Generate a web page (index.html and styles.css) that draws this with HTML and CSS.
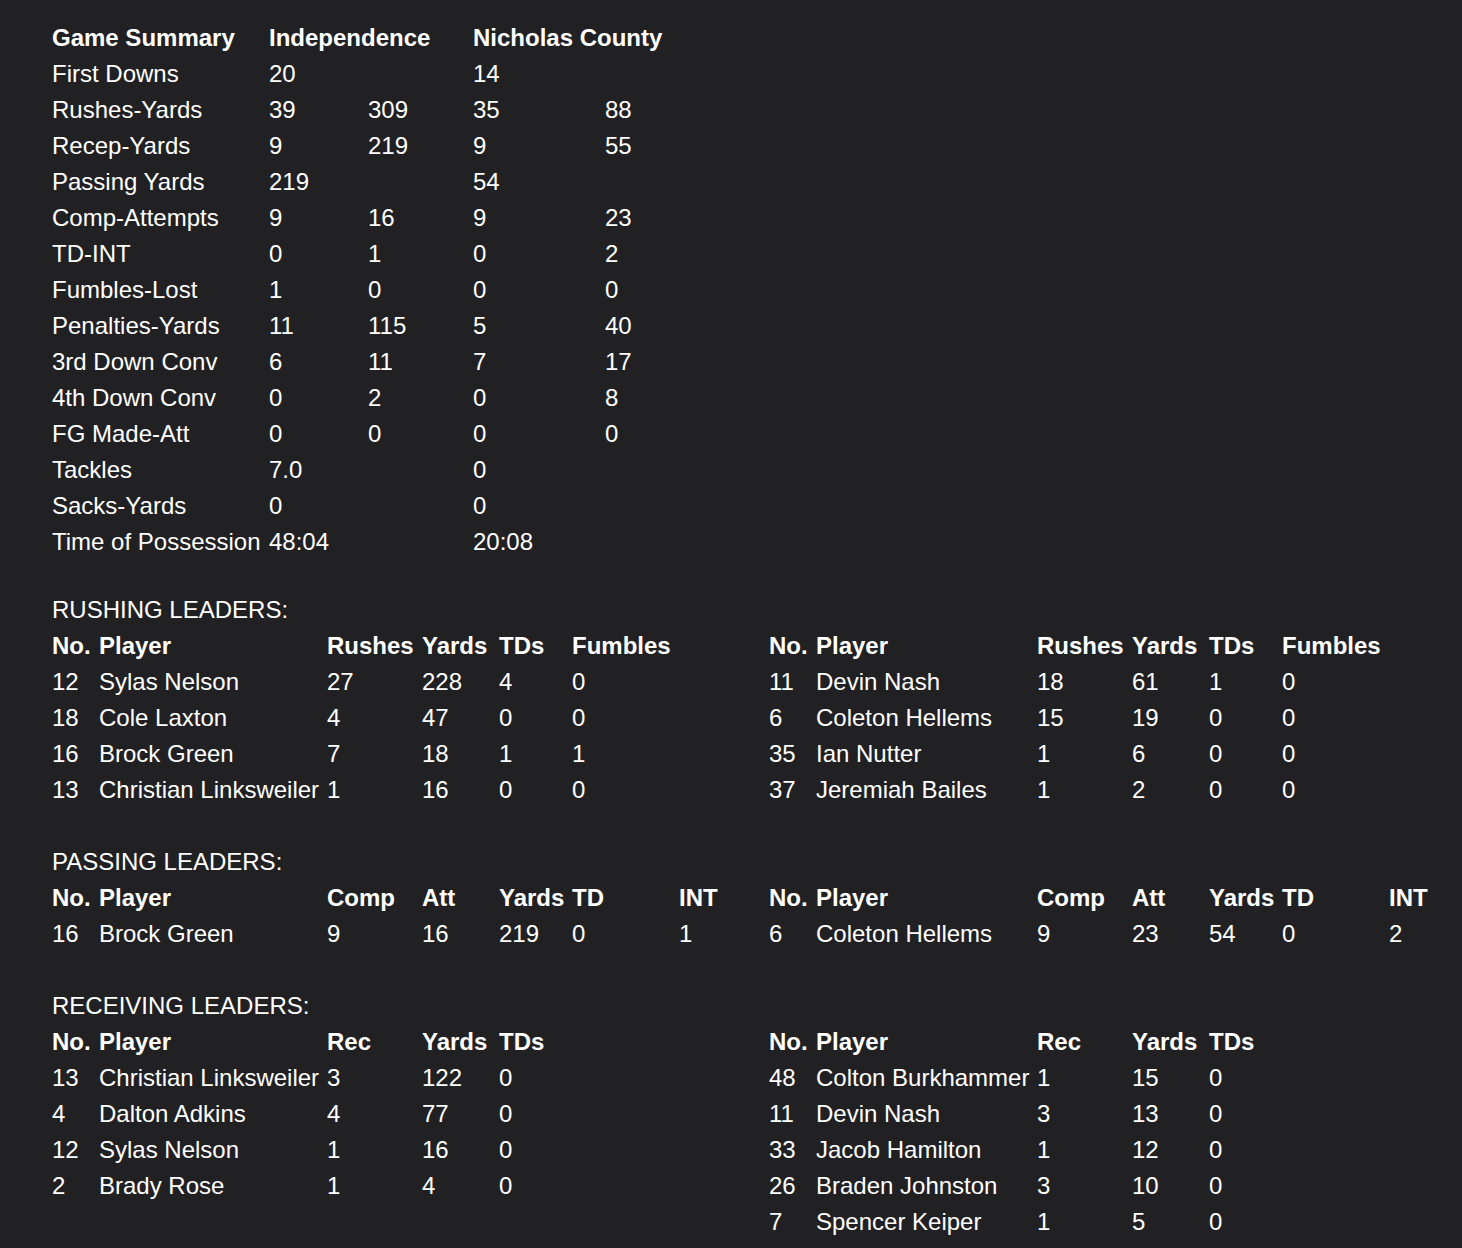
FILE: index.html
```html
<!DOCTYPE html>
<html lang="en">
<head>
<meta charset="utf-8">
<title>Game Summary</title>
<link rel="stylesheet" href="styles.css">
</head>
<body>
<main class="page">
  <table class="summary">
    <colgroup>
      <col class="s-label"><col class="s-a"><col class="s-b"><col class="s-c"><col class="s-d">
    </colgroup>
    <thead>
      <tr><th>Game Summary</th><th colspan="2">Independence</th><th colspan="2">Nicholas County</th></tr>
    </thead>
    <tbody>
      <tr><td>First Downs</td><td>20</td><td></td><td>14</td><td></td></tr>
      <tr><td>Rushes-Yards</td><td>39</td><td>309</td><td>35</td><td>88</td></tr>
      <tr><td>Recep-Yards</td><td>9</td><td>219</td><td>9</td><td>55</td></tr>
      <tr><td>Passing Yards</td><td>219</td><td></td><td>54</td><td></td></tr>
      <tr><td>Comp-Attempts</td><td>9</td><td>16</td><td>9</td><td>23</td></tr>
      <tr><td>TD-INT</td><td>0</td><td>1</td><td>0</td><td>2</td></tr>
      <tr><td>Fumbles-Lost</td><td>1</td><td>0</td><td>0</td><td>0</td></tr>
      <tr><td>Penalties-Yards</td><td>11</td><td>115</td><td>5</td><td>40</td></tr>
      <tr><td>3rd Down Conv</td><td>6</td><td>11</td><td>7</td><td>17</td></tr>
      <tr><td>4th Down Conv</td><td>0</td><td>2</td><td>0</td><td>8</td></tr>
      <tr><td>FG Made-Att</td><td>0</td><td>0</td><td>0</td><td>0</td></tr>
      <tr><td>Tackles</td><td>7.0</td><td></td><td>0</td><td></td></tr>
      <tr><td>Sacks-Yards</td><td>0</td><td></td><td>0</td><td></td></tr>
      <tr><td>Time of Possession</td><td>48:04</td><td></td><td>20:08</td><td></td></tr>
    </tbody>
  </table>

  <table class="leaders">
    <colgroup>
      <col class="c-no"><col class="c-player-l"><col class="c-3"><col class="c-4"><col class="c-5"><col class="c-6"><col class="c-7">
      <col class="c-no"><col class="c-player-r"><col class="c-3"><col class="c-4"><col class="c-5"><col class="c-6"><col class="c-7r">
    </colgroup>
    <tbody>
      <tr><td class="title" colspan="14">RUSHING LEADERS:</td></tr>
      <tr class="head">
        <th>No.</th><th>Player</th><th>Rushes</th><th>Yards</th><th>TDs</th><th>Fumbles</th><th></th>
        <th>No.</th><th>Player</th><th>Rushes</th><th>Yards</th><th>TDs</th><th>Fumbles</th><th></th>
      </tr>
      <tr><td>12</td><td>Sylas Nelson</td><td>27</td><td>228</td><td>4</td><td>0</td><td></td>
          <td>11</td><td>Devin Nash</td><td>18</td><td>61</td><td>1</td><td>0</td><td></td></tr>
      <tr><td>18</td><td>Cole Laxton</td><td>4</td><td>47</td><td>0</td><td>0</td><td></td>
          <td>6</td><td>Coleton Hellems</td><td>15</td><td>19</td><td>0</td><td>0</td><td></td></tr>
      <tr><td>16</td><td>Brock Green</td><td>7</td><td>18</td><td>1</td><td>1</td><td></td>
          <td>35</td><td>Ian Nutter</td><td>1</td><td>6</td><td>0</td><td>0</td><td></td></tr>
      <tr><td>13</td><td>Christian Linksweiler</td><td>1</td><td>16</td><td>0</td><td>0</td><td></td>
          <td>37</td><td>Jeremiah Bailes</td><td>1</td><td>2</td><td>0</td><td>0</td><td></td></tr>
      <tr class="spacer"><td colspan="14"></td></tr>

      <tr><td class="title" colspan="14">PASSING LEADERS:</td></tr>
      <tr class="head">
        <th>No.</th><th>Player</th><th>Comp</th><th>Att</th><th>Yards</th><th>TD</th><th>INT</th>
        <th>No.</th><th>Player</th><th>Comp</th><th>Att</th><th>Yards</th><th>TD</th><th>INT</th>
      </tr>
      <tr><td>16</td><td>Brock Green</td><td>9</td><td>16</td><td>219</td><td>0</td><td>1</td>
          <td>6</td><td>Coleton Hellems</td><td>9</td><td>23</td><td>54</td><td>0</td><td>2</td></tr>
      <tr class="spacer"><td colspan="14"></td></tr>

      <tr><td class="title" colspan="14">RECEIVING LEADERS:</td></tr>
      <tr class="head">
        <th>No.</th><th>Player</th><th>Rec</th><th>Yards</th><th>TDs</th><th></th><th></th>
        <th>No.</th><th>Player</th><th>Rec</th><th>Yards</th><th>TDs</th><th></th><th></th>
      </tr>
      <tr><td>13</td><td>Christian Linksweiler</td><td>3</td><td>122</td><td>0</td><td></td><td></td>
          <td>48</td><td>Colton Burkhammer</td><td>1</td><td>15</td><td>0</td><td></td><td></td></tr>
      <tr><td>4</td><td>Dalton Adkins</td><td>4</td><td>77</td><td>0</td><td></td><td></td>
          <td>11</td><td>Devin Nash</td><td>3</td><td>13</td><td>0</td><td></td><td></td></tr>
      <tr><td>12</td><td>Sylas Nelson</td><td>1</td><td>16</td><td>0</td><td></td><td></td>
          <td>33</td><td>Jacob Hamilton</td><td>1</td><td>12</td><td>0</td><td></td><td></td></tr>
      <tr><td>2</td><td>Brady Rose</td><td>1</td><td>4</td><td>0</td><td></td><td></td>
          <td>26</td><td>Braden Johnston</td><td>3</td><td>10</td><td>0</td><td></td><td></td></tr>
      <tr><td></td><td></td><td></td><td></td><td></td><td></td><td></td>
          <td>7</td><td>Spencer Keiper</td><td>1</td><td>5</td><td>0</td><td></td><td></td></tr>
    </tbody>
  </table>
</main>
</body>
</html>
```

FILE: styles.css
```css
html, body {
  margin: 0;
  padding: 0;
  background: #212124;
}

body {
  color: #ffffff;
  font-family: "Liberation Sans", Arial, Helvetica, sans-serif;
  font-size: 24px;
}

.page {
  padding: 20px 0 0 52px;
}

table {
  border-collapse: collapse;
  table-layout: fixed;
}

th, td {
  padding: 0;
  height: 36px;
  line-height: 36px;
  text-align: left;
  vertical-align: middle;
  white-space: nowrap;
}

th {
  font-weight: bold;
}

.summary { width: 653px; }
.s-label { width: 217px; }
.s-a { width: 99px; }
.s-b { width: 105px; }
.s-c { width: 132px; }
.s-d { width: 100px; }

.leaders {
  margin-top: 32px;
  width: 1384px;
}

.c-no { width: 47px; }
.c-player-l { width: 228px; }
.c-player-r { width: 221px; }
.c-3 { width: 95px; }
.c-4 { width: 77px; }
.c-5 { width: 73px; }
.c-6 { width: 107px; }
.c-7 { width: 90px; }
.c-7r { width: 60px; }

.title {
  font-weight: normal;
}

.spacer td {
  height: 36px;
}
```
